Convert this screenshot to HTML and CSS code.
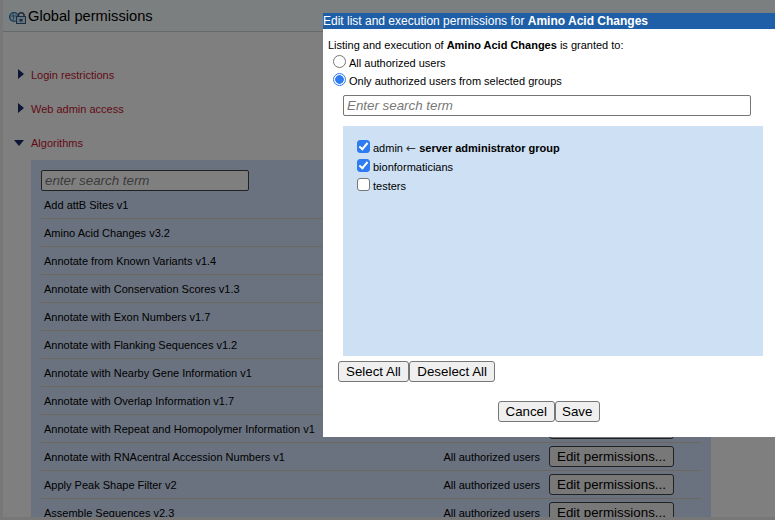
FILE: index.html
```html
<!DOCTYPE html>
<html lang="en">
<head>
    <meta charset="UTF-8">
    <title>Global permissions</title>
    <link rel="stylesheet" href="styles.css">
</head>
<body>
    <div class="page">
        <div class="main">
            <div class="page-title">
                <svg class="title-icon" width="17" height="13" viewBox="0 0 17 13">
                    <circle cx="5" cy="6" r="4.4" fill="#cfe6f7" stroke="#2a78b8" stroke-width="1.3"/>
                    <path d="M3.5 2c1.5 2 1.5 6 0 8M1 5h7" fill="none" stroke="#2a78b8" stroke-width=".8"/>
                    <path d="M9.5 6V3.5a3 3 0 0 1 5.5 0V6" fill="none" stroke="#2a4a66" stroke-width="1.4"/>
                    <rect x="7.5" y="5.5" width="9" height="7" fill="#d4e6f4" stroke="#2a5f8a"/>
                    <rect x="10.5" y="8" width="3" height="2.5" fill="#2a5f8a"/>
                </svg>
                <h1>Global permissions</h1>
            </div>

            <div class="sections">
                <h2 class="section-head"><span class="arrow-right"></span>Login restrictions</h2>
                <h2 class="section-head"><span class="arrow-right"></span>Web admin access</h2>
                <h2 class="section-head open"><span class="arrow-down"></span>Algorithms</h2>

                <div class="algo-panel">
                    <input class="algo-search" type="text" placeholder="enter search term">
                    <div class="algo-row"><span class="algo-name">Add attB Sites v1</span><span class="algo-status">All authorized users</span><button class="edit-btn">Edit permissions...</button></div>
                    <div class="algo-row"><span class="algo-name">Amino Acid Changes v3.2</span><span class="algo-status">All authorized users</span><button class="edit-btn">Edit permissions...</button></div>
                    <div class="algo-row"><span class="algo-name">Annotate from Known Variants v1.4</span><span class="algo-status">All authorized users</span><button class="edit-btn">Edit permissions...</button></div>
                    <div class="algo-row"><span class="algo-name">Annotate with Conservation Scores v1.3</span><span class="algo-status">All authorized users</span><button class="edit-btn">Edit permissions...</button></div>
                    <div class="algo-row"><span class="algo-name">Annotate with Exon Numbers v1.7</span><span class="algo-status">All authorized users</span><button class="edit-btn">Edit permissions...</button></div>
                    <div class="algo-row"><span class="algo-name">Annotate with Flanking Sequences v1.2</span><span class="algo-status">All authorized users</span><button class="edit-btn">Edit permissions...</button></div>
                    <div class="algo-row"><span class="algo-name">Annotate with Nearby Gene Information v1</span><span class="algo-status">All authorized users</span><button class="edit-btn">Edit permissions...</button></div>
                    <div class="algo-row"><span class="algo-name">Annotate with Overlap Information v1.7</span><span class="algo-status">All authorized users</span><button class="edit-btn">Edit permissions...</button></div>
                    <div class="algo-row"><span class="algo-name">Annotate with Repeat and Homopolymer Information v1</span><span class="algo-status">All authorized users</span><button class="edit-btn">Edit permissions...</button></div>
                    <div class="algo-row"><span class="algo-name">Annotate with RNAcentral Accession Numbers v1</span><span class="algo-status">All authorized users</span><button class="edit-btn">Edit permissions...</button></div>
                    <div class="algo-row"><span class="algo-name">Apply Peak Shape Filter v2</span><span class="algo-status">All authorized users</span><button class="edit-btn">Edit permissions...</button></div>
                    <div class="algo-row"><span class="algo-name">Assemble Sequences v2.3</span><span class="algo-status">All authorized users</span><button class="edit-btn">Edit permissions...</button></div>
                </div>
            </div>
        </div>
        <div class="footer-strip"></div>
    </div>

    <div class="overlay"></div>

    <div class="dialog">
        <div class="dialog-title">Edit list and execution permissions for <b>Amino Acid Changes</b></div>
        <div class="dialog-body">
            <p class="intro">Listing and execution of <b>Amino Acid Changes</b> is granted to:</p>
            <label class="radio-line"><input type="radio" name="grant">All authorized users</label>
            <label class="radio-line"><input type="radio" name="grant" checked>Only authorized users from selected groups</label>
            <input class="group-search" type="text" placeholder="Enter search term">
            <div class="group-box">
                <label class="group-line"><input type="checkbox" checked><span>admin <span class="arrow">&larr;</span> <b>server administrator group</b></span></label>
                <label class="group-line"><input type="checkbox" checked>bionformaticians</label>
                <label class="group-line"><input type="checkbox">testers</label>
            </div>
            <div class="select-btns">
                <button class="dlg-btn">Select All</button><button class="dlg-btn deselect">Deselect All</button>
            </div>
            <div class="save-btns">
                <button class="dlg-btn">Cancel</button><button class="dlg-btn">Save</button>
            </div>
        </div>
    </div>
</body>
</html>
```

FILE: styles.css
```css
html, body {
    margin: 0;
    height: 520px;
    overflow: hidden;
    background: #ffffff;
    font-family: "Liberation Sans", Arial, sans-serif;
    font-size: 11px;
    color: #000;
}

.page {
    height: 520px;
    display: flex;
    flex-direction: column;
}

.main {
    flex: 1;
    min-height: 0;
    overflow: hidden;
    border-left: 3px solid #eeeeee;
}

.footer-strip {
    position: relative;
    height: 3px;
    background: #eeeeee;
}

.page-title {
    height: 31px;
    display: flex;
    align-items: center;
    padding-left: 6px;
    background: #f6feff;
    border-bottom: 1px solid #d0d0d0;
}

.title-icon {
    margin-top: 4px;
}

.page-title h1 {
    margin: 0 0 0 2px;
    font-size: 14.67px;
    font-weight: normal;
}

.sections {
    padding-top: 36px;
}

.section-head {
    position: relative;
    height: 14px;
    line-height: 14px;
    margin: 0 0 20px 28px;
    font-size: 11px;
    font-weight: normal;
    color: #c8142f;
}

.section-head.open {
    margin-bottom: 10px;
}

.arrow-right {
    position: absolute;
    left: -13px;
    top: 1px;
    border-left: 6px solid #1b2f6b;
    border-top: 5.5px solid transparent;
    border-bottom: 5.5px solid transparent;
}

.arrow-down {
    position: absolute;
    left: -17px;
    top: 4px;
    border-top: 6px solid #1b2f6b;
    border-left: 5px solid transparent;
    border-right: 5px solid transparent;
}

.algo-panel {
    margin: 0 64px 0 28px;
    padding: 10px 10px 0;
    background: #d4e4ff;
}

.algo-search {
    display: block;
    box-sizing: border-box;
    width: 208px;
    height: 21px;
    margin: 0;
    padding: 0 3px;
    border: 1px solid #444;
    border-radius: 2px;
    background: #fff;
    font-family: inherit;
    font-size: 13.33px;
    font-style: italic;
}

.algo-search::placeholder {
    color: #777;
}

.algo-row {
    box-sizing: border-box;
    height: 28px;
    display: flex;
    align-items: center;
    padding-left: 3px;
    border-bottom: 1px solid #d8cfc0;
}

.algo-name {
    flex: 1;
}

.algo-status {
    margin-right: 9px;
}

.edit-btn {
    box-sizing: border-box;
    width: 125px;
    height: 21px;
    margin-right: 27px;
    padding: 0;
    border: 1px solid #444;
    border-radius: 3px;
    background: #f0f0f0;
    font-family: inherit;
    font-size: 13.33px;
    color: #000;
}

.overlay {
    position: fixed;
    inset: 0;
    background: rgba(0, 0, 0, 0.5);
}

.dialog {
    position: fixed;
    left: 323px;
    top: 13px;
    width: 452px;
    height: 424px;
    background: #fff;
}

.dialog-title {
    height: 16px;
    line-height: 16px;
    background: #1f5fa8;
    color: #fff;
    font-size: 12px;
}

.dialog-body {
    padding: 9px 12px 0 5px;
}

.intro {
    margin: 0 0 2px;
    line-height: 14px;
}

.radio-line {
    display: flex;
    align-items: center;
    height: 18px;
    padding-left: 5px;
}

.radio-line input {
    appearance: none;
    box-sizing: border-box;
    width: 13px;
    height: 13px;
    margin: 0 3px 4px 0;
    border: 1px solid #767676;
    border-radius: 50%;
    background: #fff;
}

.radio-line input:checked {
    border: 1px solid #2f7bf0;
    background: radial-gradient(circle, #2f7bf0 0 4px, #fff 4.6px);
}

.group-search {
    display: block;
    box-sizing: border-box;
    width: 408px;
    height: 21px;
    margin: 5px 0 10px 15px;
    padding: 0 3px;
    border: 1px solid #767676;
    border-radius: 2px;
    font-family: inherit;
    font-size: 13.33px;
    font-style: italic;
}

.group-search::placeholder {
    color: #777;
}

.group-box {
    box-sizing: border-box;
    width: 420px;
    height: 230px;
    margin-left: 15px;
    padding: 12px 14px 0;
    background: #cde0f4;
}

.group-line {
    display: flex;
    align-items: center;
    height: 19px;
    white-space: pre;
}

.group-line .arrow {
    font-family: "DejaVu Sans", sans-serif;
    font-size: 12px;
    line-height: 11px;
    color: #333;
}

.group-line input {
    appearance: none;
    position: relative;
    box-sizing: border-box;
    width: 13px;
    height: 13px;
    margin: 0 3px 2px 0;
    border: 1px solid #767676;
    border-radius: 3px;
    background: #fff;
}

.group-line input:checked {
    border-color: #2f7bf0;
    background: #2f7bf0;
}

.group-line input:checked::after {
    content: "";
    position: absolute;
    left: 3px;
    top: 0;
    width: 5px;
    height: 9px;
    border-right: 2px solid #fff;
    border-bottom: 2px solid #fff;
    box-sizing: border-box;
    transform: rotate(40deg);
}

.select-btns {
    margin: 5px 0 0 10px;
    display: flex;
}

.save-btns {
    margin-top: 19px;
    margin-left: 170px;
    display: flex;
}

.dlg-btn {
    box-sizing: border-box;
    height: 21px;
    padding: 0 7px;
    border: 1px solid #767676;
    border-radius: 3px;
    background: #efefef;
    font-family: inherit;
    font-size: 13.33px;
    color: #000;
}

.dlg-btn.deselect {
    padding: 0 7.5px;
}

.save-btns .dlg-btn {
    padding: 0 6.5px;
}
```
